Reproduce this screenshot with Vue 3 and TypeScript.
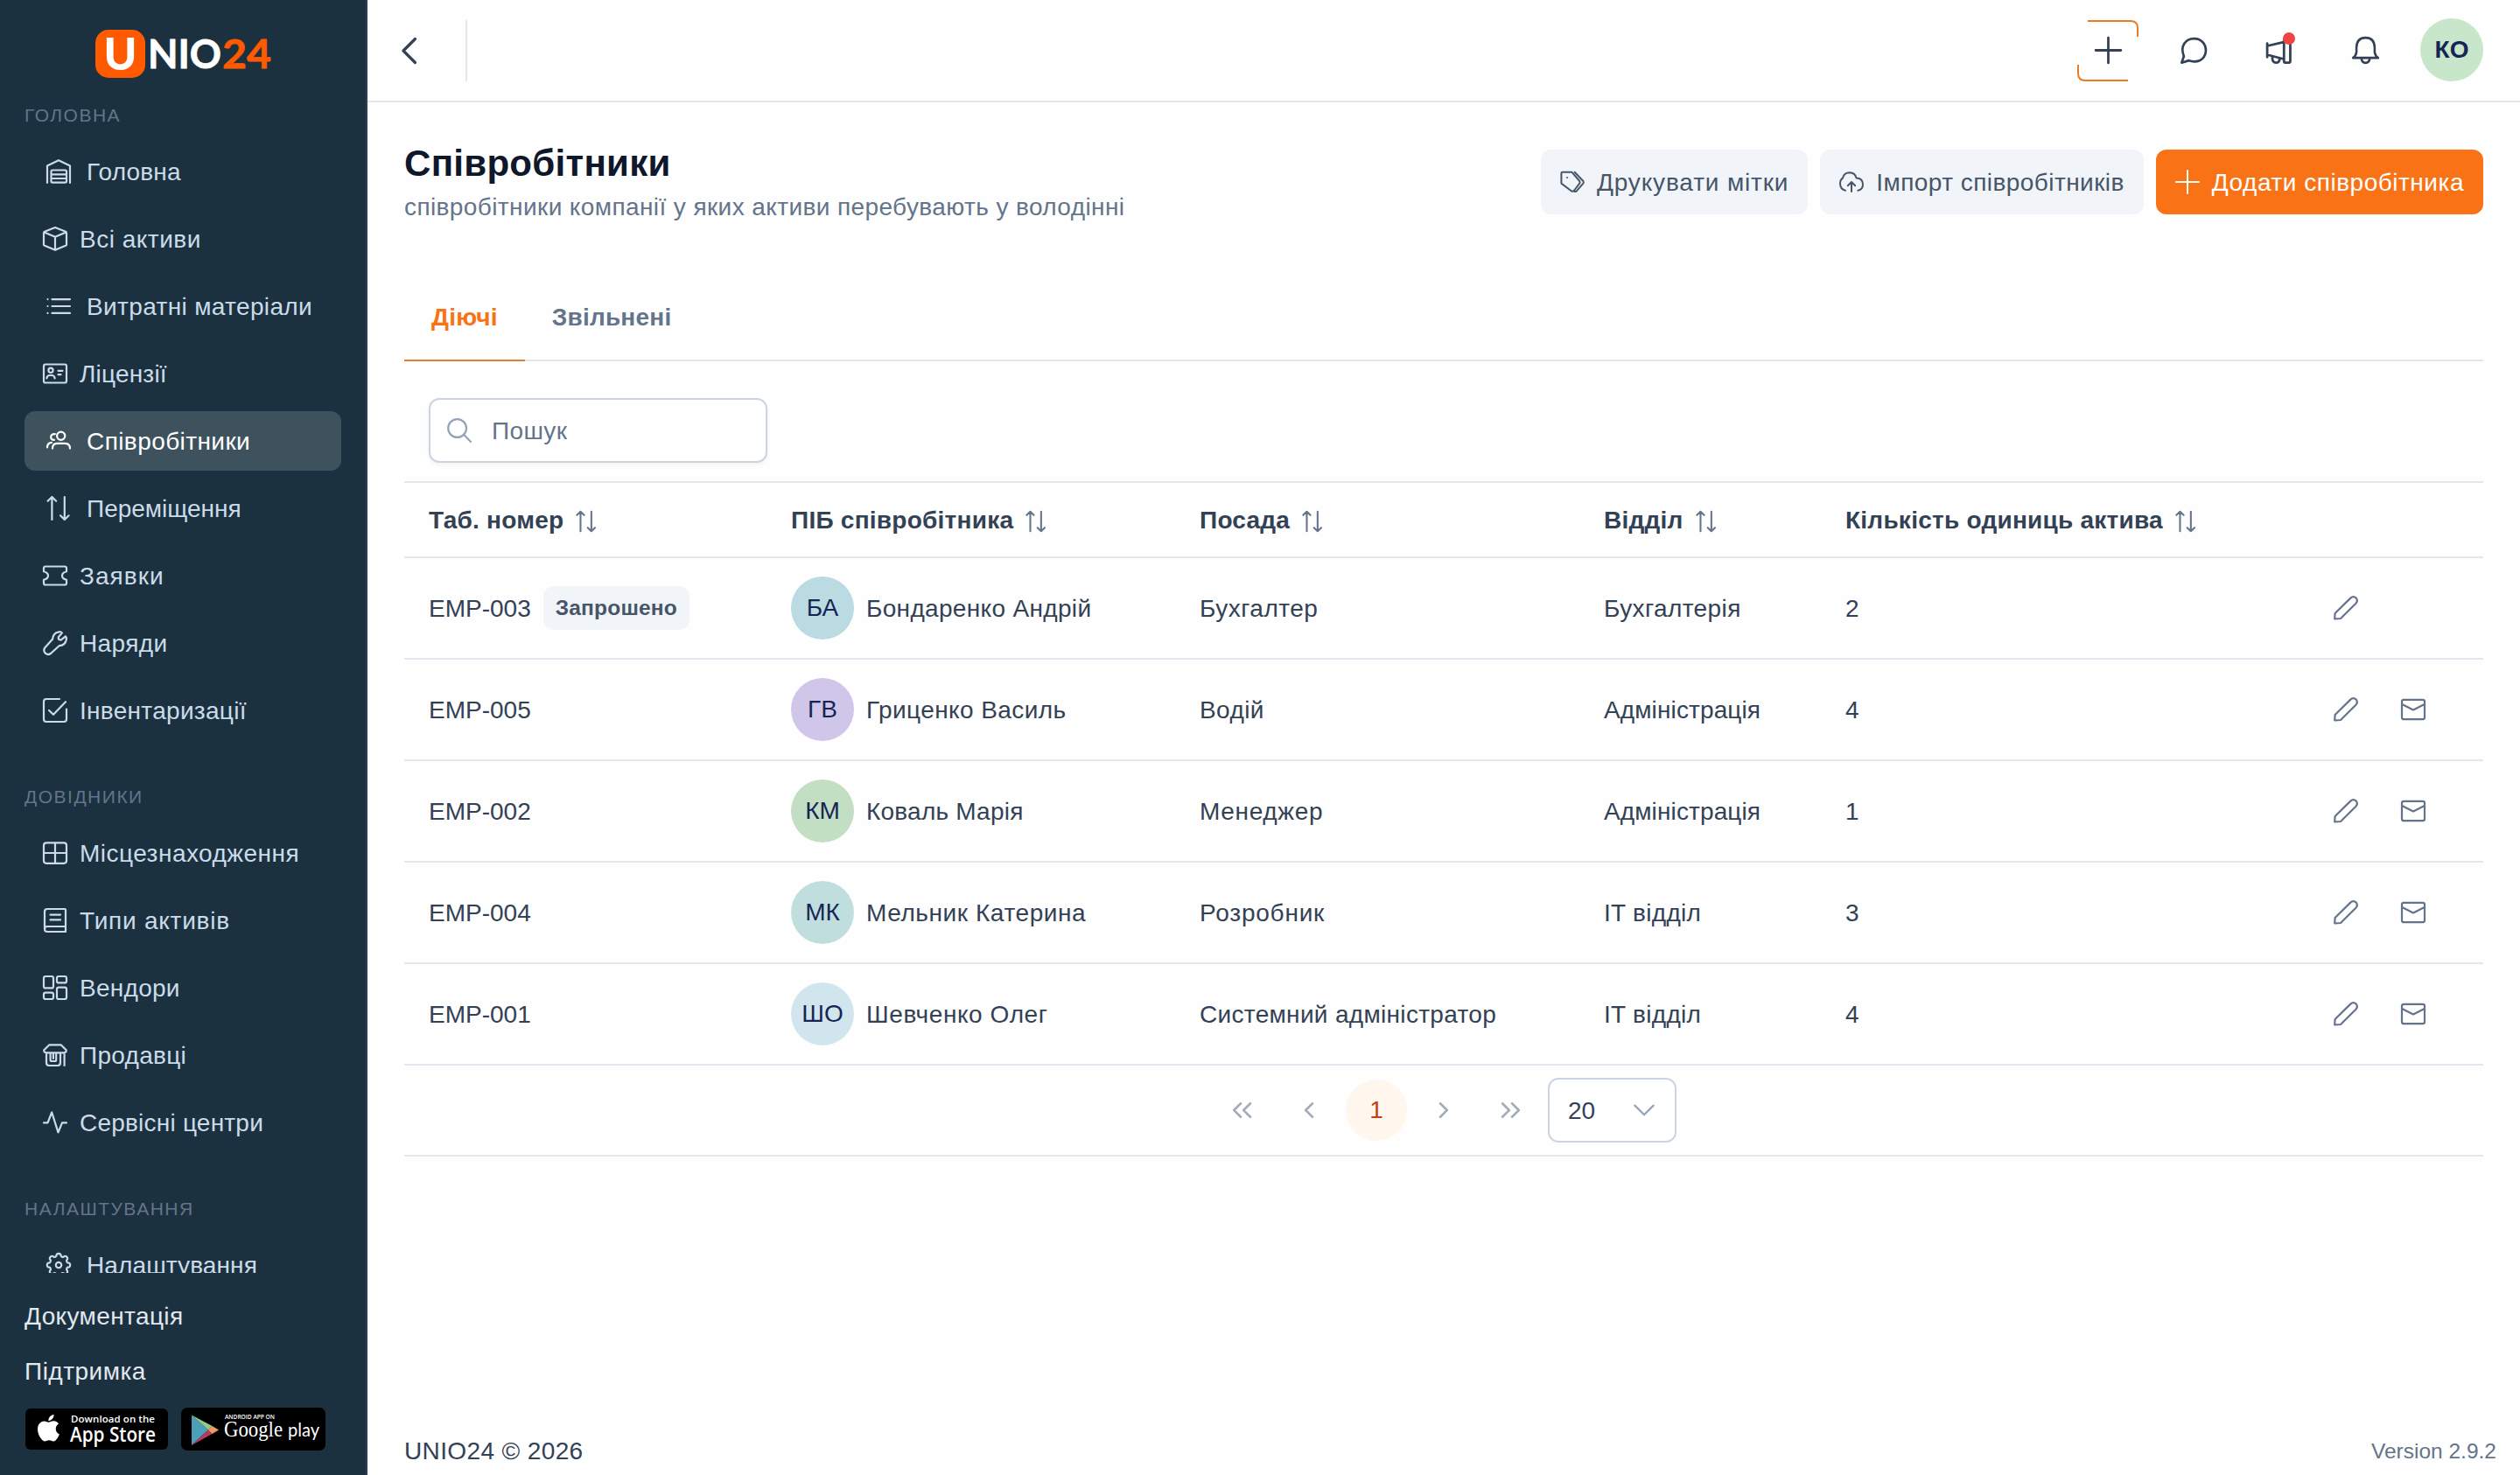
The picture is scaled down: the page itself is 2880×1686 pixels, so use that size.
<script setup lang="ts">
import { h } from 'vue'

function gear(): string {
  const pts: string[] = []
  for (let i = 0; i < 8; i++) {
    const a = (i * Math.PI) / 4 - Math.PI / 2
    const p = (r: number, o: number) =>
      `${(14 + r * Math.cos(a + o)).toFixed(2)} ${(14 + r * Math.sin(a + o)).toFixed(2)}`
    pts.push(`${i ? 'L' : 'M'}${p(10.8, -0.24)}Q${p(13.4, -0.2)} ${p(13.2, 0)}Q${p(13.4, 0.2)} ${p(10.8, 0.24)}Q${p(9.4, 0.39)} ${p(10.8, 0.545)}`)
  }
  return pts.join('') + 'ZM17.2 14a3.2 3.2 0 1 1-6.4 0a3.2 3.2 0 1 1 6.4 0Z'
}

/* 28-unit line icons, drawn as strokes */
const glyphs: Record<string, string> = {
  warehouse: 'M1 27V7.5L14 1.2L27 7.5V27M7 12.5H21.5Q23 12.5 23 14V25Q23 26.6 21.5 26.6H7Q5.5 26.6 5.5 25V14Q5.5 12.5 7 12.5ZM5.5 17.3H23M5.5 22H23',
  box: 'M14 1L26 5.8Q27 6.3 27 7.3V20.4Q27 21.3 26 21.8L14 26.8L2 21.8Q1 21.3 1 20.4V7.3Q1 6.3 2 5.8ZM1.5 6.5L14 11.8L26.5 6.5M14 11.8V26.8',
  list: 'M1.5 6.1h.01M1.5 14h.01M1.5 21.9h.01M6.5 6.1H27M6.5 14H27M6.5 21.9H27',
  card: 'M3 3.5H25Q27 3.5 27 5.5V22.5Q27 24.5 25 24.5H3Q1 24.5 1 22.5V5.5Q1 3.5 3 3.5ZM11.6 10.2a2.6 2.6 0 1 1-5.2 0a2.6 2.6 0 1 1 5.2 0ZM4.4 19.5Q4.7 16 8 16H10Q13.3 16 13.6 19.5M17.5 10.8H22.5M17.5 15.2H20.5',
  users: 'M21.3 8.2a4.6 4.6 0 1 1-9.2 0a4.6 4.6 0 1 1 9.2 0ZM7 22.6Q7 16.8 12.5 16.8H21Q27 16.8 27 22.6M9.8 6.2Q5.2 6 5.2 9.6Q5.2 13 9 12.8M1 21.5Q1 16.2 6 15.8',
  arrows: 'M6.4 27V1M1.6 5.7L6.4 1L11.2 5.7M20.8 1V27M16 22.3L20.8 27L25.6 22.3',
  ticket: 'M3 3.5H25Q27 3.5 27 5.5V9.2Q22 10.4 22 14Q22 17.6 27 18.8V22.5Q27 24.5 25 24.5H3Q1 24.5 1 22.5V18.8Q6 17.6 6 14Q6 10.4 1 9.2V5.5Q1 3.5 3 3.5Z',
  wrench: 'M17.8 7.3V8.6Q17.8 10.2 19.4 10.3H20.9L25.9 6.3Q27.2 7.6 26.8 10.2Q25.6 16.6 18.6 17.2L9 26Q5.8 28.3 2.7 25.6Q0 22.2 2.4 19.2L11.1 9.6Q11.6 2.4 18.2 1.3Q20.6.9 21.9 2.4Z',
  check: 'M27 12.5V24Q27 27 24 27H4Q1 27 1 24V4Q1 1 4 1H19M7 14L12 18.8L26 4.2',
  grid: 'M4 2.4H24Q27 2.4 27 5.4V22.8Q27 25.8 24 25.8H4Q1 25.8 1 22.8V5.4Q1 2.4 4 2.4ZM14 2.4V25.8M1 14H27',
  book: 'M26 21H5Q2 21 2 24Q2 27 5 27H26V2Q26 1 25 1H5Q2 1 2 4V24M8.5 7.6H20M8.5 13.4H20',
  columns: 'M3 1H10Q12 1 12 3V12.4Q12 14.4 10 14.4H3Q1 14.4 1 12.4V3Q1 1 3 1ZM18 1H25Q27 1 27 3V6.4Q27 8.4 25 8.4H18Q16 8.4 16 6.4V3Q16 1 18 1ZM3 19.6H10Q12 19.6 12 21.6V25Q12 27 10 27H3Q1 27 1 25V21.6Q1 19.6 3 19.6ZM18 13.6H25Q27 13.6 27 15.6V25Q27 27 25 27H18Q16 27 16 25V15.6Q16 13.6 18 13.6Z',
  shop: 'M7.4 2.3H20.6L26.7 8.3Q27 11.3 24 11.3H4Q1 11.3 1.3 8.3ZM4 11.3V22.5Q4 26 7 26H17Q20 26 20 22.5V11.3M24.6 11.3V26M8.6 11.5V19.5Q8.6 21 10 21H13.6Q15.2 21 15.2 19.5V11.5M11.9 12V18',
  pulse: 'M1 14.4H5.5L10.2 2.5L17.5 25.3L22 14.4H27',
  gear: gear(),
  tags: 'M2.6 2.8H13.5L22.2 13Q23.2 14.3 22.2 15.6L15.8 24Q14.2 25.6 12.4 24L1.4 15.6V4Q1.4 2.8 2.6 2.8ZM16.6 2.8L26.4 13Q27.4 14.3 26.4 15.6L19 24.2Q17.8 25.4 16.4 24.8M8 9h.01',
  upload: 'M7 23.8Q1 22.2 1 15.8Q1 11.6 4 9.4Q5.5 3.2 12 3.2Q18 3.4 19.6 9.4Q27 9.6 27 16.8Q27 22.8 21.4 23.8M14 25V14M9.8 18.2L14 14L18.2 18.2',
  plus: 'M14 1V27M1 14H27',
  back: 'M20 1.4L7.4 14L20 26.6',
  chat: 'M1.2 26.8L3.6 19.8C-.6 9.5 5 1 14.4 1C22 1 27 6.5 27 13.6C27 21 21.5 26 14.6 25.6C12.6 25.6 10.6 25.2 9 24.4Z',
  horn: 'M1 7V21M1 9.5L18 5.5M1 18.5L18 23M18.3 5.5V25Q18.3 26.8 20.2 26.8H22.8Q24.8 26.8 24.8 25V4Q24.8 2.2 22.8 2.2H20.2Q18.3 2.2 18.3 4ZM6.3 20.5V22.2Q6.3 26.8 10 26.8Q13.8 26.8 13.8 22.5',
  bell: 'M1 21.8H27Q24 20 23.4 16V11Q23 1 14 1Q5 1 4.6 11V16Q4 20 1 21.8ZM9.6 22.3Q10.2 27 14 27Q17.8 27 18.4 22.3',
  search: 'M22 11.5a10.4 10.4 0 1 1-20.8 0a10.4 10.4 0 1 1 20.8 0ZM19.3 19L27 27',
  pencil: 'M1.2 26.5L1.6 20L19.3 2.6Q22.4-.2 25.6 2.4Q28.2 5.6 25.4 8.8L8 26Z',
  mail: 'M3.2 2.8H24.8Q27 2.8 27 5V23Q27 25.2 24.8 25.2H3.2Q1 25.2 1 23V5Q1 2.8 3.2 2.8ZM1.2 8L14 14.5L26.8 8',
  first: 'M13 6.3L5.2 14L13 21.7M24 6.3L16.2 14L24 21.7',
  prev: 'M18 6.3L10.2 14L18 21.7',
  next: 'M10 6.3L17.8 14L10 21.7',
  last: 'M4 6.3L11.8 14L4 21.7M15 6.3L22.8 14L15 21.7',
  down: 'M2.5 8.2L14 19.6L25.5 8.2',
}

const Icon = (p: { name: string; size?: number; w?: number }) =>
  h('svg', {
    class: 'icon', viewBox: '0 0 28 28', width: p.size ?? 28, height: p.size ?? 28,
    fill: 'none', stroke: 'currentColor', 'stroke-width': p.w ?? 2.2,
    'stroke-linecap': 'round', 'stroke-linejoin': 'round',
  }, [h('path', { d: glyphs[p.name] })])
Icon.props = ['name', 'size', 'w']

/* tracking, in px, of labels that differ from the default */
const tracking: Record<string, number> = {
  'Головна': 0.2, 'Всі активи': 0.5, 'Витратні матеріали': 0.36, 'Ліцензії': 0.2, 'Переміщення': 0, 'Інвентаризації': 0.3,
  'Місцезнаходження': 0.48, 'Типи активів': 0.76, 'Сервісні центри': 0.22, 'Продавці': 0.3, 'Налаштування': 0.12,
  'Наряди': 0.4, 'Заявки': 1.05, 'Вендори': 0.28, 'Документація': 0.38, 'Підтримка': 0.5,
  'Бондаренко Андрій': 0.33, 'Мельник Катерина': 0.58, 'Шевченко Олег': 0.58, 'Коваль Марія': 0.22,
  'Системний адміністратор': 0.32, 'Адміністрація': 0.12, 'Бухгалтер': 0.5, 'Бухгалтерія': 0.4,
  'Розробник': 0.78, 'Менеджер': 0.68, 'Водій': 0.4, 'IT відділ': 0.3,
  'Друкувати мітки': 0.84, 'Імпорт співробітників': 0.44, 'Додати співробітника': 0.52,
}
const ls = (t: string) => ({ letterSpacing: `${tracking[t] ?? 0.42}px` })

interface Item { label: string; icon: string; wide?: boolean; active?: boolean }
const menu: { title: string; items: Item[] }[] = [
  {
    title: 'ГОЛОВНА',
    items: [
      { label: 'Головна', icon: 'warehouse', wide: true },
      { label: 'Всі активи', icon: 'box' },
      { label: 'Витратні матеріали', icon: 'list', wide: true },
      { label: 'Ліцензії', icon: 'card' },
      { label: 'Співробітники', icon: 'users', wide: true, active: true },
      { label: 'Переміщення', icon: 'arrows', wide: true },
      { label: 'Заявки', icon: 'ticket' },
      { label: 'Наряди', icon: 'wrench' },
      { label: 'Інвентаризації', icon: 'check' },
    ],
  },
  {
    title: 'ДОВІДНИКИ',
    items: [
      { label: 'Місцезнаходження', icon: 'grid' },
      { label: 'Типи активів', icon: 'book' },
      { label: 'Вендори', icon: 'columns' },
      { label: 'Продавці', icon: 'shop' },
      { label: 'Сервісні центри', icon: 'pulse' },
    ],
  },
  { title: 'НАЛАШТУВАННЯ', items: [{ label: 'Налаштування', icon: 'gear', wide: true }] },
]

const links = ['Документація', 'Підтримка']

const buttons = [
  { label: 'Друкувати мітки', icon: 'tags' },
  { label: 'Імпорт співробітників', icon: 'upload' },
  { label: 'Додати співробітника', icon: 'plus', primary: true },
]

const columns = ['Таб. номер', 'ПІБ співробітника', 'Посада', 'Відділ', 'Кількість одиниць актива']

const rows = [
  { id: 'EMP-003', invited: true, ini: 'БА', bg: '#badbe1', name: 'Бондаренко Андрій', post: 'Бухгалтер', dept: 'Бухгалтерія', n: 2 },
  { id: 'EMP-005', invited: false, ini: 'ГВ', bg: '#cfc6e9', name: 'Гриценко Василь', post: 'Водій', dept: 'Адміністрація', n: 4 },
  { id: 'EMP-002', invited: false, ini: 'КМ', bg: '#c2dfc3', name: 'Коваль Марія', post: 'Менеджер', dept: 'Адміністрація', n: 1 },
  { id: 'EMP-004', invited: false, ini: 'МК', bg: '#c1dede', name: 'Мельник Катерина', post: 'Розробник', dept: 'IT відділ', n: 3 },
  { id: 'EMP-001', invited: false, ini: 'ШО', bg: '#d1e5ee', name: 'Шевченко Олег', post: 'Системний адміністратор', dept: 'IT відділ', n: 4 },
]
</script>

<template>
  <div class="app">
    <aside class="sidebar">
      <svg class="logo" width="204" height="66" viewBox="0 -4 204 66">
        <rect x="0" y="2" width="57" height="55" rx="15" fill="#ff5a00" />
        <text x="9.5" y="47.5" class="logo-u" textLength="38" lengthAdjust="spacingAndGlyphs">U</text>
        <text x="60" y="46" class="logo-t" fill="#fff" stroke="#fff" textLength="84" lengthAdjust="spacingAndGlyphs">NIO</text>
        <text x="145" y="46" class="logo-t" fill="#ff5a00" stroke="#ff5a00" textLength="56" lengthAdjust="spacingAndGlyphs">24</text>
      </svg>
      <nav class="menu">
        <section v-for="s in menu" :key="s.title" class="group">
          <div class="group-title">{{ s.title }}</div>
          <a v-for="i in s.items" :key="i.label" class="item" :class="{ active: i.active }">
            <span class="item-icon" :class="{ wide: i.wide }"><Icon :name="i.icon" /></span>
            <span class="txt" :style="ls(i.label)">{{ i.label }}</span>
          </a>
        </section>
      </nav>
      <div class="side-foot">
        <a v-for="l in links" :key="l" class="side-link" :style="ls(l)">{{ l }}</a>
        <div class="badges">
          <svg width="163" height="47" viewBox="0 0 163 47">
            <rect width="163" height="47" rx="6" fill="#000" />
            <path transform="translate(11.2 7) scale(1.27)" fill="#fff" d="M12.152 6.896c-.948 0-2.415-1.078-3.96-1.04-2.04.027-3.91 1.183-4.961 3.014-2.117 3.675-.546 9.103 1.519 12.09 1.013 1.454 2.208 3.09 3.792 3.039 1.52-.065 2.09-.987 3.935-.987 1.831 0 2.35.987 3.96.948 1.637-.026 2.676-1.48 3.676-2.948 1.156-1.688 1.636-3.325 1.662-3.415-.039-.013-3.182-1.221-3.22-4.857-.026-3.04 2.48-4.494 2.597-4.559-1.429-2.09-3.623-2.324-4.39-2.376-2-.156-3.675 1.09-4.61 1.09zM15.53 3.83c.843-1.012 1.4-2.427 1.245-3.83-1.207.052-2.662.805-3.532 1.818-.78.896-1.454 2.338-1.273 3.714 1.338.104 2.715-.688 3.559-1.701" />
            <text x="52" y="15.6" class="as-small" textLength="96" lengthAdjust="spacing">Download on the</text>
            <text x="51" y="38" class="as-big" textLength="98" lengthAdjust="spacingAndGlyphs">App Store</text>
          </svg>
          <svg width="165" height="49" viewBox="0 0 165 49">
            <rect width="165" height="49" rx="7" fill="#000" />
            <path d="M12 8.5V43L31 25.5Z" fill="#4c9fb8" />
            <path d="M12 8.5L35.5 21L31 25.5Z" fill="#8fca8c" />
            <path d="M12 43L35.5 30L31 25.5Z" fill="#b8395c" />
            <path d="M35.5 21L43 25.5L35.5 30L31 25.5Z" fill="#f39a5e" />
            <text x="50" y="12.8" class="gp-small" textLength="57" lengthAdjust="spacingAndGlyphs">ANDROID APP ON</text>
            <text x="49" y="33" class="gp-serif" textLength="67" lengthAdjust="spacingAndGlyphs">Google</text>
            <text x="122" y="33" class="gp-sans" textLength="36" lengthAdjust="spacingAndGlyphs">play</text>
          </svg>
        </div>
      </div>
    </aside>

    <div class="content">
      <header class="topbar">
        <div class="back"><Icon name="back" :size="30" :w="3" /></div>
        <div class="tools">
          <div class="create">
            <svg class="frame" width="70" height="70" viewBox="0 0 70 70" fill="none" stroke="#e97c22" stroke-width="2">
              <path d="M12 1H61Q69 1 69 9V19M1 51V61Q1 69 9 69H58" />
            </svg>
            <Icon name="plus" :size="31" :w="2.5" />
          </div>
          <div class="tool"><Icon name="chat" :size="30" :w="2.5" /></div>
          <div class="tool"><Icon name="horn" :size="31" :w="2.5" /><i class="dot"></i></div>
          <div class="tool"><Icon name="bell" :size="31" :w="2.3" /></div>
          <div class="avatar me">КО</div>
        </div>
      </header>

      <main class="main">
        <div class="heading">
          <div>
            <h1>Співробітники</h1>
            <p>співробітники компанії у яких активи перебувають у володінні</p>
          </div>
          <div class="actions">
            <button v-for="b in buttons" :key="b.label" class="btn" :class="{ primary: b.primary }">
              <Icon :name="b.icon" :w="2" /><span class="txt" :style="ls(b.label)">{{ b.label }}</span>
            </button>
          </div>
        </div>

        <div class="tabs">
          <div class="tab on">Діючі</div>
          <div class="tab">Звільнені</div>
        </div>

        <div class="filter">
          <div class="search"><Icon name="search" :size="28" /><span class="txt">Пошук</span></div>
        </div>

        <div class="table">
          <div class="tr th">
            <div v-for="c in columns" :key="c" class="td"><span class="txt">{{ c }}</span><Icon name="arrows" class="sort" :w="2.4" /></div>
            <div class="td"></div>
          </div>
          <div v-for="r in rows" :key="r.id" class="tr">
            <div class="td"><span class="txt num">{{ r.id }}</span><span v-if="r.invited" class="tag">Запрошено</span></div>
            <div class="td">
              <span class="avatar" :style="{ background: r.bg }">{{ r.ini }}</span>
              <span class="txt" :style="ls(r.name)">{{ r.name }}</span>
            </div>
            <div class="td"><span class="txt" :style="ls(r.post)">{{ r.post }}</span></div>
            <div class="td"><span class="txt" :style="ls(r.dept)">{{ r.dept }}</span></div>
            <div class="td"><span class="txt num">{{ r.n }}</span></div>
            <div class="td ops">
              <span class="op"><Icon name="pencil" /></span>
              <span v-if="!r.invited" class="op"><Icon name="mail" /></span>
            </div>
          </div>
        </div>

        <div class="pager">
          <span class="pg"><Icon name="first" :w="2.6" /></span>
          <span class="pg"><Icon name="prev" :w="2.6" /></span>
          <span class="pg cur">1</span>
          <span class="pg"><Icon name="next" :w="2.6" /></span>
          <span class="pg"><Icon name="last" :w="2.6" /></span>
          <div class="size"><span class="txt num">20</span><Icon name="down" :size="26" :w="2.4" /></div>
        </div>
      </main>

      <footer class="foot">
        <span>UNIO24 © 2026</span>
        <span class="ver">Version 2.9.2</span>
      </footer>
    </div>
  </div>
</template>

<style>
body { background: #fff; }
</style>

<style scoped>
* { box-sizing: border-box; }
.app {
  display: flex;
  width: 2880px;
  height: 1686px;
  overflow: hidden;
  background: #fefefe;
  color: #334155;
  font: 28px/32px "Liberation Sans", Arial, sans-serif;
}
.icon { display: block; flex: none; overflow: visible; }
.txt { padding-top: 2px; }

.sidebar {
  width: 420px;
  flex: none;
  display: flex;
  flex-direction: column;
  background: #1b313f;
  border-right: 2px solid #2b3f56;
  color: #cbd5e1;
}
.logo { flex: none; margin: 28px 0 0 109px; overflow: visible; }
.logo-u { font: 900 51px Lato, sans-serif; fill: #fff; }
.logo-t { font: 700 46px Lato, sans-serif; stroke-width: .8px; }
.menu { height: 1361px; padding: 25px 28px 0; flex: none; overflow: hidden; }
.group { margin-bottom: 52px; }
.group-title {
  height: 26px;
  margin-bottom: 17px;
  font-size: 21px;
  line-height: 26px;
  letter-spacing: 1.5px;
  color: #64748b;
  white-space: nowrap;
}
.item {
  display: flex;
  align-items: center;
  gap: 14px;
  height: 68px;
  padding-left: 21px;
  border-radius: 12px;
  white-space: nowrap;
  color: #cbdbe9;
}
.item + .item { margin-top: 9px; }
.item.active { background: #3d525c; color: #fff; }
.item-icon { display: flex; justify-content: center; width: 28px; }
.item-icon.wide { width: 36px; }
.side-foot { padding: 34px 28px 0; color: #e2e8f0; }
.side-link { display: block; height: 32px; margin-bottom: 31px; }
.badges { display: flex; align-items: center; gap: 15px; margin: -6px 0 0 1px; }
.as-small { font: 600 11.5px "Open Sans", sans-serif; fill: #fff; }
.as-big { font: 600 22.5px "Open Sans", sans-serif; fill: #fff; }
.gp-small { font: 600 7px "Open Sans", sans-serif; fill: #fff; }
.gp-serif { font: 25px "Liberation Serif", serif; fill: #fff; }
.gp-sans { font: 22px Lato, sans-serif; fill: #fff; }

.content { flex: 1; display: flex; flex-direction: column; min-width: 0; }
.topbar {
  height: 117px;
  flex: none;
  display: flex;
  justify-content: space-between;
  align-items: center;
  padding-right: 42px;
  border-bottom: 2px solid #e5e7eb;
}
.back {
  display: flex;
  align-items: center;
  width: 114px;
  height: 70px;
  padding-left: 33px;
  border-right: 2px solid #e5e7eb;
  color: #334155;
}
.tools { display: flex; align-items: center; color: #334155; }
.create, .tool {
  position: relative;
  width: 70px;
  height: 70px;
  display: flex;
  align-items: center;
  justify-content: center;
  margin-right: 28px;
}
.frame { position: absolute; left: 0; top: 0; }
.dot {
  position: absolute;
  left: 39px;
  top: 14px;
  width: 14px;
  height: 14px;
  border-radius: 50%;
  background: #ef4444;
}
.avatar {
  width: 72px;
  height: 72px;
  flex: none;
  display: flex;
  align-items: center;
  justify-content: center;
  border-radius: 50%;
  margin-right: 14px;
  color: #172554;
}
.avatar.me { margin: -2px 0 0; background: #c8e6c9; font-weight: 700; }

.main { flex: 1; padding: 54px 42px 0; }
.heading { display: flex; justify-content: space-between; height: 160px; }
h1 { margin: -8px 0 0; font-size: 42px; line-height: 48px; letter-spacing: .3px; color: #0f172a; }
p { margin: 10px 0 0; letter-spacing: .4px; color: #64748b; white-space: nowrap; }
.actions { display: flex; gap: 14px; height: 74px; }
.btn {
  display: flex;
  align-items: center;
  gap: 14px;
  height: 74px;
  padding: 0 22px;
  border: 0;
  border-radius: 12px;
  background: #f1f5f9;
  color: #475569;
  font: inherit;
  white-space: nowrap;
}
.btn.primary { background: #f97316; color: #fff; }

.tabs {
  display: flex;
  height: 82px;
  border-bottom: 2px solid #e5e7eb;
  font-weight: 700;
  letter-spacing: .22px;
  color: #64748b;
}
.tab { height: 82px; padding: 16px 31px 0; }
.tab.on { color: #f97316; border-bottom: 2px solid #e07f31; }
.filter { height: 139px; padding: 42px 28px 0; border-bottom: 2px solid #e5e7eb; }
.search {
  display: flex;
  align-items: center;
  gap: 23px;
  width: 387px;
  height: 74px;
  padding-left: 19px;
  border: 2px solid #cbd5e1;
  border-radius: 12px;
  box-shadow: 0 2px 4px rgba(18, 18, 23, .05);
  background: #fff;
  color: #64748b;
  letter-spacing: .4px;
}
.search .icon { color: #94a3b8; }
.tr {
  display: grid;
  grid-template-columns: 414px 467px 462px 276px 537px 220px;
  height: 116px;
  border-bottom: 2px solid #e2e8f0;
}
.th { height: 86px; font-weight: 700; letter-spacing: .25px; }
.td { display: flex; align-items: center; padding-left: 28px; white-space: nowrap; }
.num { letter-spacing: 0; }
.sort { margin: 4px 0 0 12px; color: #64748b; transform: scale(.86); }
.tag {
  height: 50px;
  margin-left: 14px;
  padding: 0 14px;
  border-radius: 12px;
  background: #f1f5f9;
  color: #475569;
  font: 700 24.5px/50px "Liberation Sans", Arial, sans-serif;
  letter-spacing: .2px;
}
.ops { gap: 7px; color: #64748b; }
.op { width: 70px; display: flex; justify-content: center; }
.pager {
  display: flex;
  align-items: center;
  justify-content: center;
  gap: 7px;
  height: 104px;
  border-bottom: 2px solid #e2e8f0;
  color: #a3acb9;
}
.pg { width: 70px; height: 70px; display: flex; align-items: center; justify-content: center; border-radius: 50%; }
.cur { background: #fff7ed; color: #c2410c; }
.size {
  display: flex;
  align-items: center;
  justify-content: space-between;
  width: 147px;
  height: 74px;
  padding: 0 22px 0 21px;
  border: 2px solid #cbd5e1;
  border-radius: 12px;
  background: #fff;
  color: #334155;
}
.size .icon { color: #94a3b8; }
.foot {
  display: flex;
  align-items: center;
  justify-content: space-between;
  height: 56px;
  padding: 1px 27px 0 42px;
  letter-spacing: .38px;
}
.ver { font-size: 24.5px; letter-spacing: 0; color: #64748b; }
</style>
